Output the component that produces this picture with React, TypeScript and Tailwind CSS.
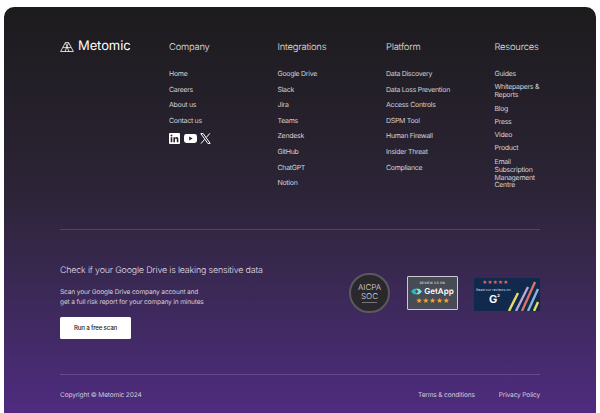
const columns = [
  { title: "Company", links: ["Home", "Careers", "About us", "Contact us"] },
  {
    title: "Integrations",
    links: ["Google Drive", "Slack", "Jira", "Teams", "Zendesk", "GitHub", "ChatGPT", "Notion"],
  },
  {
    title: "Platform",
    links: [
      "Data Discovery",
      "Data Loss Prevention",
      "Access Controls",
      "DSPM Tool",
      "Human Firewall",
      "Insider Threat",
      "Compliance",
    ],
  },
];

const resources = [
  "Guides",
  "Whitepapers & Reports",
  "Blog",
  "Press",
  "Video",
  "Product",
  "Email Subscription Management Centre",
];

function Logo() {
  return (
    <div className="-mt-[1px] flex items-center gap-[4px]">
      <svg width="14" height="10" viewBox="0 0 14 10" fill="none" stroke="white" strokeWidth="0.8">
        <path d="M0.6 9.5 L5.4 0.6 H8.6 L13.4 9.5 Z" />
        <path d="M5.4 0.6 L9 9.5 M8.6 0.6 L5 9.5 M3 5.6 H11" />
      </svg>
      <span className="text-[13px] leading-none font-normal tracking-[-0.1px] text-white">Metomic</span>
    </div>
  );
}

function Socials() {
  return (
    <div className="mt-[9px] flex items-center gap-[3.5px]">
      <svg width="11" height="11" viewBox="0 0 11 11">
        <rect width="11" height="11" rx="1" fill="white" />
        <rect x="1.7" y="4.2" width="1.6" height="5" fill="#262329" />
        <circle cx="2.5" cy="2.5" r="0.95" fill="#262329" />
        <path d="M4.4 4.2 H5.9 V4.9 C6.3 4.3 6.9 4.1 7.5 4.1 C8.8 4.1 9.4 4.9 9.4 6.2 V9.2 H7.8 V6.6 C7.8 5.9 7.5 5.5 7 5.5 C6.4 5.5 6 5.9 6 6.6 V9.2 H4.4 Z" fill="#262329" />
      </svg>
      <svg width="13" height="9" viewBox="0 0 13 9">
        <rect width="13" height="9" rx="2.4" fill="white" />
        <path d="M5.2 2.6 L8.6 4.5 L5.2 6.4 Z" fill="#262329" />
      </svg>
      <svg width="11" height="11" viewBox="0 0 11 11" fill="none" stroke="white">
        <path d="M0.8 0.6 H3.2 L10.2 10.4 H7.8 Z" strokeWidth="1" />
        <path d="M9.8 0.4 L6.2 4.6 M4.6 6.4 L1 10.6" strokeWidth="1" />
      </svg>
    </div>
  );
}

function LinkColumn({ title, links, children }: { title: string; links: string[]; children?: React.ReactNode }) {
  return (
    <div className="w-[108.5px] shrink-0">
      <h4 className="text-[9.4px] leading-[14px] font-light tracking-[-0.2px] text-[#e2e0e5]">{title}</h4>
      <ul className="mt-[15px] flex flex-col gap-[8.3px]">
        {links.map((l) => (
          <li key={l} className="text-[7px] leading-[7.3px] tracking-[-0.3px] text-[#d2d0d6]">
            {l}
          </li>
        ))}
      </ul>
      {children}
    </div>
  );
}

function AicpaBadge() {
  return (
    <div className="flex h-[40px] w-[41px] flex-col items-center justify-center rounded-full border-[2px] border-[#5b585e] bg-[#2b282d] text-[#d8d6da]">
      <span className="text-[8px] leading-[9px] font-light">AICPA</span>
      <span className="text-[8px] leading-[9px] font-light">SOC</span>
      <span className="mt-[1px] h-[1px] w-[15px] bg-[#77747a]" />
    </div>
  );
}

function GetAppBadge() {
  return (
    <div className="flex h-[34px] w-[51px] flex-col items-center justify-center rounded-[1px] border border-[#c9cbd0] bg-[#474b55]">
      <span className="text-[3px] leading-[5px] tracking-[0.3px] text-white">REVIEW US ON</span>
      <div className="flex items-center gap-[2px]">
        <svg width="11" height="7" viewBox="0 0 12 7">
          <path d="M0 3.5 L3 0.5 H7 L4.5 3.5 L7 6.5 H3 Z" fill="#2fb5c8" />
          <path d="M5.5 0.5 H9 L12 3.5 L9 6.5 H5.5 L8 3.5 Z" fill="#7fe0d8" />
        </svg>
        <span className="text-[8px] leading-[11px] font-semibold text-white">GetApp</span>
      </div>
      <span className="text-[6.5px] leading-[8px] text-[#f6a832]">★★★★★</span>
    </div>
  );
}

function G2Badge() {
  return (
    <div className="relative h-[33px] w-[66px] overflow-hidden bg-[#10294d]">
      <div className="pt-[2px] pl-[8px] text-[5px] leading-[7px] text-[#ef6a5a]">★★★★★</div>
      <div className="pl-[2px] text-[3.6px] leading-[6px] text-[#d7dce4]">Read our reviews on</div>
      <div className="flex items-start pl-[15px] font-bold text-white">
        <span className="text-[11px] leading-[13px]">G</span>
        <span className="text-[4px] leading-[5px]">2</span>
      </div>
      <svg className="absolute top-0 right-0" width="34" height="33" viewBox="0 0 34 33" strokeWidth="2.4">
        <path d="M3 33 L12 15" stroke="#eadb6a" />
        <path d="M10 33 L22 9" stroke="#b9a7d8" />
        <path d="M16 33 L29 4" stroke="#d9746a" />
        <path d="M22 33 L32 11" stroke="#8fb3d9" />
        <path d="M28 33 L32 24" stroke="#eadb6a" />
      </svg>
    </div>
  );
}

export default function App() {
  return (
    <div className="h-[413px] overflow-hidden bg-white pt-[7px] pr-[4px] pl-[4px] font-['Inter',sans-serif] antialiased [text-rendering:geometricPrecision]">
      <footer className="h-[406px] rounded-t-[10px] bg-gradient-to-b from-[#1c1b1d] via-[#2c2436] via-45% to-[#4f2b80] px-[56px] pt-[34px]">
        {/* links */}
        <div className="flex h-[188.5px] border-b border-white/15">
          <div className="w-[109px] shrink-0">
            <Logo />
          </div>
          {columns.map((c) => (
            <LinkColumn key={c.title} title={c.title} links={c.links}>
              {c.title === "Company" ? <Socials /> : null}
            </LinkColumn>
          ))}
          <div className="min-w-0 flex-1">
            <h4 className="text-[9.4px] leading-[14px] font-light tracking-[-0.2px] text-[#e2e0e5]">Resources</h4>
            <ul className="mt-[15px] flex flex-col gap-[5.4px]">
              {resources.map((l) => (
                <li key={l} className="text-[7px] leading-[7.9px] tracking-[-0.3px] text-[#d2d0d6]">
                  {l}
                </li>
              ))}
            </ul>
          </div>
        </div>

        {/* scan cta */}
        <div className="flex h-[145px] items-start justify-between border-b border-white/15 pt-[34px]">
          <div>
            <h3 className="text-[8.9px] leading-[14px] font-light tracking-[-0.17px] text-[#e0dde6]">
              Check if your Google Drive is leaking sensitive data
            </h3>
            <p className="mt-[9px] text-[6.6px] leading-[10.5px] tracking-[-0.16px] text-[#d2ced9]">
              Scan your Google Drive company account and
              <br />
              get a full risk report for your company in minutes
            </p>
            <button
              type="button"
              className="mt-[9px] flex h-[22px] w-[71px] items-center justify-center rounded-[1.5px] bg-white text-[6.2px] font-medium tracking-[-0.2px] text-[#1c1b1d]"
            >
              Run a free scan
            </button>
          </div>
          <div className="flex items-center pt-[9px]">
            <AicpaBadge />
            <div className="ml-[17px]">
              <GetAppBadge />
            </div>
            <div className="mt-[3px] ml-[16px]">
              <G2Badge />
            </div>
          </div>
        </div>

        {/* bottom */}
        <div className="flex justify-between pt-[15px] text-[6.6px] leading-[10px] tracking-[-0.17px] text-[#cfcad8]">
          <span>Copyright © Metomic 2024</span>
          <div className="flex gap-[24px]">
            <span>Terms & conditions</span>
            <span>Privacy Policy</span>
          </div>
        </div>
      </footer>
    </div>
  );
}
